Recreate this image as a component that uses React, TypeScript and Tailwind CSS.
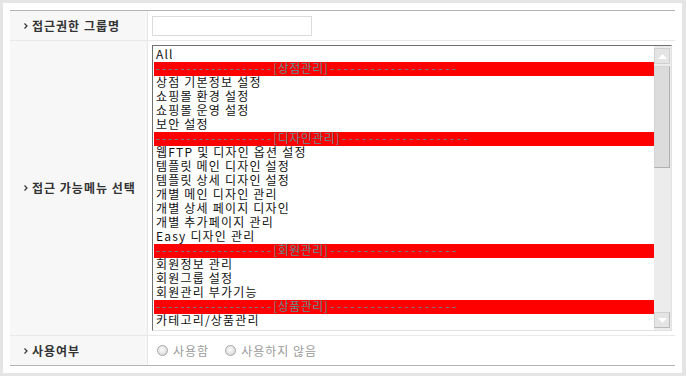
const KR = { fontFamily: '"Noto Sans CJK KR", "Noto Sans", sans-serif' };

type Item = { text: string; group?: boolean };

const items: Item[] = [
  { text: "All" },
  { text: "상점관리", group: true },
  { text: "상점 기본정보 설정" },
  { text: "쇼핑몰 환경 설정" },
  { text: "쇼핑몰 운영 설정" },
  { text: "보안 설정" },
  { text: "디자인관리", group: true },
  { text: "웹FTP 및 디자인 옵션 설정" },
  { text: "템플릿 메인 디자인 설정" },
  { text: "템플릿 상세 디자인 설정" },
  { text: "개별 메인 디자인 관리" },
  { text: "개별 상세 페이지 디자인" },
  { text: "개별 추가페이지 관리" },
  { text: "Easy 디자인 관리" },
  { text: "회원관리", group: true },
  { text: "회원정보 관리" },
  { text: "회원그룹 설정" },
  { text: "회원관리 부가기능" },
  { text: "상품관리", group: true },
  { text: "카테고리/상품관리" },
];

const DASHES = "-------------------";

function Label({ children }: { children: string }) {
  return (
    <div className="flex w-[138px] items-center border-r border-[#e6e6e6] bg-[#f7f7f7] pl-[14px]">
      <svg width="4" height="6" viewBox="0 0 4 6" className="mr-[4px]">
        <path d="M0.5 0.5 L3 3 L0.5 5.5" fill="none" stroke="#333" strokeWidth="1.2" />
      </svg>
      <span className="text-[12px] font-bold leading-none tracking-[1px] text-[#333]">{children}</span>
    </div>
  );
}

function Radio({ label }: { label: string }) {
  return (
    <div className="flex items-center gap-[5px]">
      <span className="h-[11px] w-[11px] rounded-full border border-[#a8a8a8] bg-[radial-gradient(circle_at_45%_40%,#ffffff_0%,#dcdcdc_70%,#c4c4c4_100%)]" />
      <span className="text-[12px] leading-none tracking-[1px] text-[#9a9a9a]">{label}</span>
    </div>
  );
}

function Scrollbar() {
  return (
    <div className="flex w-[17px] flex-col bg-[#ececec] pt-[2px]">
      <div className="flex h-[16px] w-[16px] items-center justify-center border border-[#d0d0d0] bg-[#e4e4e4]">
        <svg width="9" height="5" viewBox="0 0 9 5">
          <path d="M0 5 L4.5 0 L9 5 Z" fill="#ffffff" />
        </svg>
      </div>
      <div className="mt-[2px] h-[102px] w-[16px] border border-[#d4d4d4] border-r-[#b0b0b0] border-b-[#b0b0b0] bg-[#dcdcdc]" />
      <div className="flex-1" />
      <div className="flex h-[16px] w-[16px] items-center justify-center border border-[#d0d0d0] border-r-[#b8b8b8] border-b-[#b8b8b8] bg-[#e4e4e4]">
        <svg width="9" height="5" viewBox="0 0 9 5">
          <path d="M0 0 L4.5 5 L9 0 Z" fill="#ffffff" />
        </svg>
      </div>
      <div className="h-[2px]" />
    </div>
  );
}

export default function App() {
  return (
    <div className="h-[376px] w-[686px] bg-[#e5e5e5] pb-[3px] pl-[3px] pr-[4px] pt-[3px]" style={KR}>
      <div className="h-full bg-white p-[7px]">
        <div className="flex h-full flex-col border-b border-t border-[#b4b4b4]">
          {/* 그룹명 */}
          <div className="flex h-[30px] border-b border-[#e8e8e8]">
            <Label>접근권한 그룹명</Label>
            <div className="flex flex-1 items-center pl-[4px]">
              <div className="h-[20px] w-[160px] border border-[#dcdcdc] bg-white" />
            </div>
          </div>

          {/* 메뉴 선택 */}
          <div className="flex h-[295px] border-b border-[#e8e8e8]">
            <Label>접근 가능메뉴 선택</Label>
            <div className="flex-1 pl-[4px] pr-[3px] pt-[4px]">
              <div className="flex h-[286px] border border-b-[#e2e2e2] border-l-[#707070] border-r-[#e2e2e2] border-t-[#707070] bg-white">
                <div className="flex-1 pl-[1px] pt-[2px]">
                  {items.map((it, i) =>
                    it.group ? (
                      <div key={i} className="flex h-[14px] items-start whitespace-nowrap bg-[#ff0000] pl-[2px] text-[12px] leading-[12px] text-[#5f8c8c]">
                        <span className="tracking-[2px]">{DASHES}</span>
                        <span className="tracking-[0.5px]">[{it.text}]</span>
                        <span className="pl-[2px] tracking-[2.6px]">{DASHES}</span>
                      </div>
                    ) : (
                      <div key={i} className="h-[14px] whitespace-nowrap pl-[2px] text-[12px] leading-[12px] tracking-[1.2px] text-[#111]">
                        {it.text}
                      </div>
                    )
                  )}
                </div>
                <Scrollbar />
              </div>
            </div>
          </div>

          {/* 사용여부 */}
          <div className="flex flex-1">
            <Label>사용여부</Label>
            <div className="flex flex-1 items-center gap-[16px] pl-[9px]">
              <Radio label="사용함" />
              <Radio label="사용하지 않음" />
            </div>
          </div>
        </div>
      </div>
    </div>
  );
}
